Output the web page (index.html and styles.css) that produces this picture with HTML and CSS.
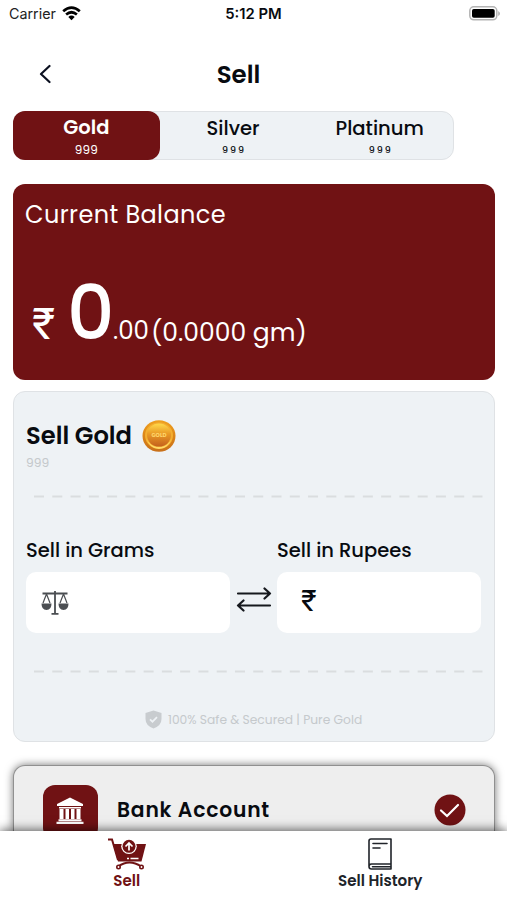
FILE: index.html
```html
<!DOCTYPE html>
<html lang="en">
<head>
<meta charset="utf-8">
<title>Sell</title>
<link rel="stylesheet" href="styles.css">
</head>
<body>
<div class="screen">
  <div class="status">
    <div class="carrier"><span class="carrier-name">Carrier</span>
      <svg width="19" height="15" viewBox="0 0 19 15" fill="none" stroke="#000" stroke-width="2.7"><path d="M1.2 5.3Q9.5-2 17.8 5.3"/><path d="M4.1 8.5Q9.5 4 14.9 8.5"/><path d="M6.3 10.9Q9.5 8.1 12.7 10.9L9.5 14.2Z" fill="#000" stroke="none"/></svg>
    </div>
    <span class="time">5:12 PM</span>
    <svg class="battery" width="32" height="15" viewBox="0 0 32 15"><rect x=".8" y=".8" width="27" height="13" rx="4" fill="#fff" stroke="#b4b4b4" stroke-width="1.5"/><rect x="3" y="3" width="22.7" height="8.8" rx="1.8"/><path d="M29.2 5v5Q31 9 31 7.5T29.2 5Z" fill="#b4b4b4"/></svg>
  </div>
  <header class="header">
    <svg class="back" width="12" height="20" viewBox="0 0 12 20" fill="none" stroke="#0b1020" stroke-width="2.2" stroke-linecap="round" stroke-linejoin="round"><path d="M10.500 2 2 10l8.500 8"/></svg>
    <h1 class="title">Sell</h1>
  </header>
  <div class="tabs">
    <div class="tab active"><span class="tab-name">Gold</span><span class="tab-purity">999</span></div>
    <div class="tab"><span class="tab-name">Silver</span><span class="tab-purity">999</span></div>
    <div class="tab"><span class="tab-name">Platinum</span><span class="tab-purity">999</span></div>
  </div>
  <section class="balance">
    <div class="balance-label">Current Balance</div>
    <div class="amount"><span class="rupee">₹</span><span class="whole">0</span><span class="cents">.00</span><span class="grams">(0.0000 gm)</span></div>
  </section>
  <section class="sell">
    <div class="sell-head"><h2 class="sell-title">Sell Gold</h2>
      <svg width="34" height="32" viewBox="0 0 34 32"><defs><linearGradient id="rim" x2="0" y2="1"><stop stop-color="#f0a11f"/><stop offset=".55" stop-color="#d98218"/><stop offset="1" stop-color="#c8701a"/></linearGradient><linearGradient id="face" x2="0" y2="1"><stop stop-color="#ffd94a"/><stop offset=".45" stop-color="#e99a26"/><stop offset="1" stop-color="#c4601c"/></linearGradient></defs><ellipse cx="17" cy="16" rx="16.500" ry="15.800" fill="url(#rim)"/><ellipse cx="17" cy="15.500" rx="14" ry="13.300" fill="#f3ae30"/><path d="M4 18Q8 29 17 29T30 18Q26 27 17 27T4 18" fill="#ffd968"/><ellipse cx="17" cy="15" rx="12" ry="11.500" fill="url(#face)"/><text x="17" y="17" text-anchor="middle" class="coin-text">GOLD</text></svg>
    </div>
    <div class="purity">999</div>
    <svg class="dash" width="449" height="3" viewBox="0 0 449 3"><path d="M0 1.500H449" stroke="#dadddf" stroke-width="2" stroke-dasharray="10 8.270"/></svg>
    <div class="fields">
      <div class="field"><span class="label">Sell in Grams</span><div class="input">
        <svg width="28" height="26" viewBox="0 0 28 26" fill="none" stroke="#4b4e52"><path d="M1.500 3.500h25M14 1v22M10.500 23.800h7" stroke-width="1.800"/><path d="M5.500 4 2 13M5.500 4 9 13M22.500 4 19 13M22.500 4 26 13" stroke-width="1.200"/><path d="M.5 13.500h10q0 6.500-5 6.500t-5-6.500ZM17.500 13.500h10q0 6.500-5 6.500t-5-6.500Z" fill="#4b4e52" stroke="none"/></svg>
      </div></div>
      <svg class="swap" width="36" height="26" viewBox="0 0 36 26" fill="none" stroke="#15181d" stroke-width="2.200" stroke-linecap="round" stroke-linejoin="round"><path d="M2 7.500h32M28.500 2.500l5.500 5-5.500 5M34 19.500H2M7.500 14.500 2 19.500l5.500 5"/></svg>
      <div class="field"><span class="label">Sell in Rupees</span><div class="input"><span class="input-rupee">₹</span></div></div>
    </div>
    <svg class="dash dash2" width="449" height="3" viewBox="0 0 449 3"><path d="M0 1.500H449" stroke="#dadddf" stroke-width="2" stroke-dasharray="10 8.270"/></svg>
    <div class="secure"><svg width="17" height="19" viewBox="0 0 17 19"><path d="M8.500.5 16.500 3v6q0 6.500-8 9.500-8-3-8-9.500V3Z" fill="#c8cccf"/><path d="m5 9.300 2.500 2.400 4.500-4.500" fill="none" stroke="#eef2f5" stroke-width="1.700"/></svg><span class="secure-text">100% Safe &amp; Secured | Pure Gold</span></div>
  </section>
  <section class="bank">
    <div class="bank-icon"><svg width="28" height="28" viewBox="0 0 28 28" fill="#fff"><path d="M14 .5 27 7v2H1V7ZM3 10h22v1.500H3zM3.500 12h4v10h-4zM9.500 12h3.500v10H9.500zM15 12h3.500v10H15zM20.500 12h4v10h-4zM2.500 22.300h23v2h-23zM.5 24.800h27V27H.5z"/></svg></div>
    <span class="bank-name">Bank Account</span>
    <svg class="check" width="32" height="32" viewBox="0 0 32 32"><circle cx="16" cy="16" r="15.500" fill="#701214"/><path d="m7 16.500 6 5.500L24 11" fill="none" stroke="#fff" stroke-width="2.200" stroke-linecap="round"/></svg>
  </section>
  <nav class="nav">
    <div class="nav-item current">
      <svg width="40" height="32" viewBox="0 0 40 32"><path d="M1 1.500h4L11 22" fill="none" stroke="#701214" stroke-width="2"/><path d="M6 6h33l-4.500 17.500H11Z" fill="#701214"/><path d="M11 28.500Q17 24.500 22.500 24.500T34.500 28.500" fill="none" stroke="#701214" stroke-width="1.800"/><circle cx="11.500" cy="29" r="1.700" fill="#fff" stroke="#701214" stroke-width="1.600"/><circle cx="34.500" cy="29" r="1.700" fill="#fff" stroke="#701214" stroke-width="1.600"/><circle cx="22" cy="8.300" r="7.800" fill="#fff"/><circle cx="22" cy="8.300" r="6.500" fill="#701214"/><path d="M22 12.500V5m-3.500 3.500L22 5l3.500 3.500" fill="none" stroke="#fff" stroke-width="1.700"/><path d="M20 20.500h2m1.500 0h8" stroke="#fff" stroke-width="1.400"/></svg>
      <span class="nav-label">Sell</span>
    </div>
    <div class="nav-item">
      <svg width="24" height="32" viewBox="0 0 24 32" fill="none" stroke="#20242a" stroke-width="1.600" stroke-linecap="round" stroke-linejoin="round"><path d="M3 1h20v30H3.500Q1 31 1 28.500V3Q1 1 3 1ZM1 28.500Q1 26 3.500 26H23M4.500 28.700H22"/><path d="M5 5.500h14M5 10h7"/></svg>
      <span class="nav-label">Sell History</span>
    </div>
  </nav>
</div>
</body>
</html>
```
FILE: styles.css
```css
* { box-sizing: border-box; }
body { margin: 0; background: #fff; color: #080b10; font-family: Poppins, Inter, sans-serif; }
h1, h2 { margin: 0; font-weight: 600; }
svg { display: block; flex: none; }
span { white-space: nowrap; }
.screen { display: flex; flex-direction: column; width: 507px; height: 900px; overflow: hidden; }
.screen > * { flex: none; }

.status { display: grid; grid-template-columns: 1fr auto 1fr; align-items: center; height: 27px; padding: 0 6px 0 9px; font-family: Inter, sans-serif; }
.carrier { display: flex; align-items: center; gap: 6px; }
.carrier-name { font-size: 14.3px; color: #222; }
.time { margin-right: 3px; font-size: 14.8px; font-weight: 600; }
.battery { justify-self: end; }

.header { display: grid; grid-template-columns: 38px 1fr 68px; align-items: center; height: 84px; padding-top: 10px; }
.back { justify-self: end; margin-right: -13px; }
.title { padding-top: 1px; font-size: 24.500px; line-height: 30px; text-align: center; }

.tabs { display: flex; width: 441px; height: 49px; margin-left: 13px; border: 1px solid #dfe2e5; border-radius: 12px; background: #eef2f5; }
.tab { display: flex; flex: 1; flex-direction: column; align-items: center; padding-top: 4px; }
.tab-name { font-size: 19.600px; line-height: 24px; font-weight: 500; }
.tab-purity { margin-right: -2px; font-size: 9.5px; line-height: 20px; font-weight: 500; letter-spacing: 2px; }
.active { margin: -1px 0 -1px -1px; padding-top: 5px; border-radius: 12px; background: #701214; color: #fff; }
.active .tab-name { font-size: 19.500px; font-weight: 600; }
.active .tab-purity { margin: 0; font-size: 12px; line-height: 20px; letter-spacing: .2px; font-weight: 400; }

.balance { width: 482px; height: 196px; margin: 24px 0 0 13px; padding: 16px 12px 0; border-radius: 12px; background: #701214; color: #fff; }
.balance-label { font-size: 24px; line-height: 30px; letter-spacing: .4px; }
.amount { display: flex; align-items: baseline; margin-top: 38px; padding-left: 7px; line-height: 90px; }
.rupee { width: 35px; font-family: Inter, sans-serif; font-size: 43px; }
.whole { width: 46px; font-size: 74px; font-weight: 500; }
.cents { width: 38px; font-size: 24.500px; }
.grams { font-size: 25px; transform: translateY(2px); }

.sell { width: 482px; height: 351px; margin: 11px 0 0 13px; padding: 28px 12px 0; border: 1px solid #dfe2e5; border-radius: 12px; background: #eef2f5; }
.sell-head { display: flex; align-items: center; gap: 9px; height: 32px; }
.sell-title { width: 107px; padding-bottom: 2px; font-size: 24.200px; white-space: nowrap; }
.coin-text { font-size: 5.500px; font-weight: 700; fill: #ffd76c; }
.purity { height: 20px; margin-top: 1px; font-size: 12.300px; line-height: 20px; color: #c5c9cc; }
.dash { margin: 22px 0 0 8px; }
.fields { display: grid; grid-template-columns: 204px 47px 204px; align-items: end; margin-top: 40px; }
.field { display: flex; flex-direction: column; gap: 9px; }
.label { font-size: 19.500px; line-height: 25px; font-weight: 500; }
.input { display: flex; align-items: center; height: 61px; padding-left: 15px; border-radius: 10px; background: #fff; }
.input-rupee { padding: 0 0 4px 9px; font-family: Inter, sans-serif; font-size: 29px; }
.swap { margin: 0 0 21px 6px; }
.dash2 { margin-top: 37px; }
.secure { display: flex; align-items: center; gap: 6px; margin: 37px 0 0 119px; }
.secure-text { font-size: 12.250px; color: #c5c9cc; }

.bank { display: flex; align-items: flex-start; width: 482px; height: 66px; margin: 23px 0 0 13px; padding: 19px 29px 0; border: 1px solid #909090; border-bottom: 0; border-radius: 12px 12px 0 0; background: #eee; box-shadow: 0 0 8px rgba(0,0,0,.55); }
.bank-icon { display: grid; justify-items: center; align-items: start; width: 55px; height: 55px; margin-left: -.500px; padding-top: 12px; border-radius: 12px; background: #701214; }
.bank-name { flex: 1; margin-left: 19.500px; padding-top: 12px; font-size: 20.300px; line-height: 26px; font-weight: 600; letter-spacing: .800px; }
.check { margin: 9px -1px 0 0; }

.nav { position: relative; display: flex; height: 69px; background: #fff; box-shadow: 0 -1px 10px rgba(0,0,0,.65); }
.nav-item { display: flex; flex: 1; flex-direction: column; align-items: center; padding-top: 7px; }
.nav-label { margin-top: 1px; font-size: 15.100px; line-height: 20px; font-weight: 600; color: #20242a; }
.current .nav-label { color: #701214; }
```
